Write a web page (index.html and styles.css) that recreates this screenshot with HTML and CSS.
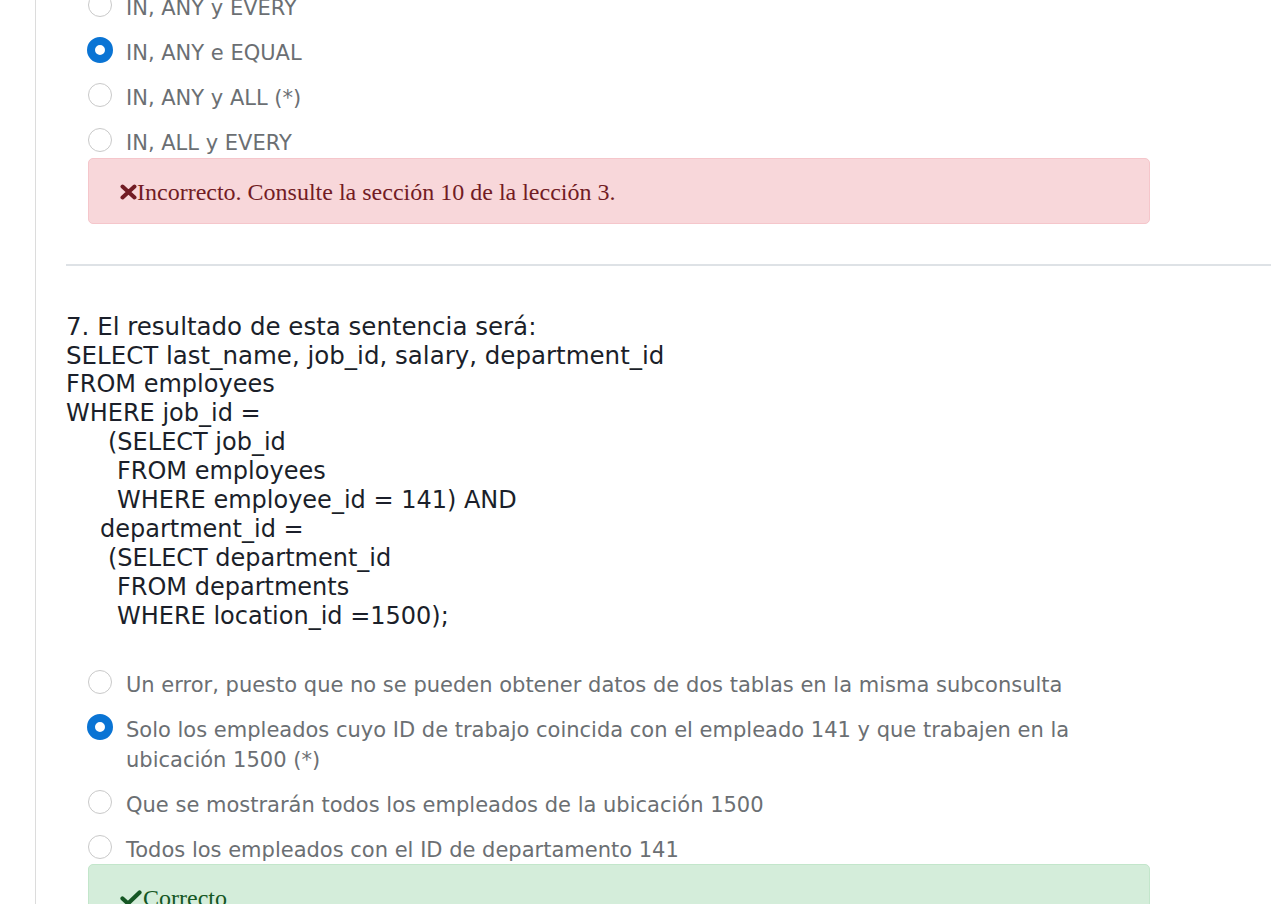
FILE: index.html
```html
<!DOCTYPE html>
<html lang="es">
<head>
<meta charset="utf-8">
<title>Cuestionario</title>
<link rel="stylesheet" href="styles.css">
</head>
<body>
<div class="main">
  <section class="question">
    <ul class="options">
      <li class="option"><span class="radio"></span><span class="label">IN, ANY y EVERY</span></li>
      <li class="option"><span class="radio checked"></span><span class="label">IN, ANY e EQUAL</span></li>
      <li class="option"><span class="radio"></span><span class="label">IN, ANY y ALL (*)</span></li>
      <li class="option"><span class="radio"></span><span class="label">IN, ALL y EVERY</span></li>
    </ul>
    <div class="alert alert-wrong">
      <svg class="icon" width="17" height="16" viewBox="0 0 17 16"><path d="M2.5 2.5 L14.5 13.5 M14.5 2.5 L2.5 13.5" stroke="#721c24" stroke-width="4" stroke-linecap="round" fill="none"/></svg><span>Incorrecto. Consulte la sección 10 de la lección 3.</span>
    </div>
  </section>

  <hr class="divider">

  <section class="question q7">
    <div class="qtext">
      <div class="line wide">7. El resultado de esta sentencia será:</div>
      <div class="line wide">SELECT last_name, job_id, salary, department_id</div>
      <div class="line">FROM employees</div>
      <div class="line">WHERE job_id =</div>
      <div class="line in-42">(SELECT job_id</div>
      <div class="line in-51">FROM employees</div>
      <div class="line in-51">WHERE employee_id = 141) AND</div>
      <div class="line in-34">department_id =</div>
      <div class="line in-42">(SELECT department_id</div>
      <div class="line in-51">FROM departments</div>
      <div class="line in-51">WHERE location_id =1500);</div>
    </div>
    <ul class="options">
      <li class="option"><span class="radio"></span><span class="label">Un error, puesto que no se pueden obtener datos de dos tablas en la misma subconsulta</span></li>
      <li class="option"><span class="radio checked"></span><span class="label">Solo los empleados cuyo ID de trabajo coincida con el empleado 141 y que trabajen en la ubicación 1500 (*)</span></li>
      <li class="option"><span class="radio"></span><span class="label">Que se mostrarán todos los empleados de la ubicación 1500</span></li>
      <li class="option"><span class="radio"></span><span class="label">Todos los empleados con el ID de departamento 141</span></li>
    </ul>
    <div class="alert alert-right">
      <svg class="icon" width="22" height="16" viewBox="0 0 22 16"><path d="M2.5 8.5 L8 13.5 L19.5 2.5" stroke="#155724" stroke-width="4.2" stroke-linecap="round" stroke-linejoin="round" fill="none"/></svg><span>Correcto</span>
    </div>
  </section>
</div>
</body>
</html>
```
FILE: styles.css
```css
html, body {
  margin: 0;
  padding: 0;
  background: #ffffff;
  overflow: hidden;
}

body {
  height: 904px;
}

.main {
  margin-left: 35px;
  border-left: 1px solid #dcdcdc;
  padding-left: 30px;
  margin-top: -7px;
  min-height: 1000px;
}

.options {
  list-style: none;
  margin: 0 121px 0 0;
  padding: 0 0 0 22px;
  display: flex;
  flex-direction: column;
  gap: 15px;
}

.option {
  display: flex;
  align-items: flex-start;
  gap: 14px;
  font-family: "DejaVu Sans", Verdana, sans-serif;
  font-size: 21px;
  line-height: 30px;
  color: #6b6f73;
}

.radio {
  flex: 0 0 auto;
  width: 24px;
  height: 24px;
  box-sizing: border-box;
  border: 1px solid #c9c9c9;
  border-radius: 50%;
  background: #fff;
  margin-top: 0;
}

.radio.checked {
  width: 26px;
  height: 26px;
  margin-left: -1px;
  margin-right: -1px;
  margin-top: -1px;
  border: 8.5px solid #0a74d4;
  background: #fff;
}

.alert {
  margin: 0 121px 0 22px;
  border: 1px solid;
  border-radius: 5px;
  padding: 18px 31px 16px;
  font-family: "Liberation Serif", "Times New Roman", serif;
  font-size: 24px;
  line-height: 30px;
  display: flex;
  align-items: center;
}

.alert .icon {
  flex: 0 0 auto;
  margin-top: -1px;
}

.alert-wrong {
  background: #f8d7da;
  border-color: #f5c6cb;
  color: #721c24;
}

.alert-right {
  background: #d4edda;
  border-color: #c3e6cb;
  color: #155724;
  margin-top: -1px;
}

.alert-right .icon {
  margin-right: 1px;
}

.divider {
  border: 0;
  height: 2px;
  background: #dee2e6;
  margin: 40px 0 0 0;
}

.qtext {
  margin-top: 46px;
  font-family: "DejaVu Sans", Verdana, sans-serif;
  font-size: 24px;
  line-height: 29px;
  color: #1b1f2a;
  margin-bottom: 39px;
}

.line {
  white-space: pre;
}

.line.wide {
  font-size: 24.5px;
}

.in-42 { padding-left: 42px; }
.in-51 { padding-left: 51px; }
.in-34 { padding-left: 34px; }
```
